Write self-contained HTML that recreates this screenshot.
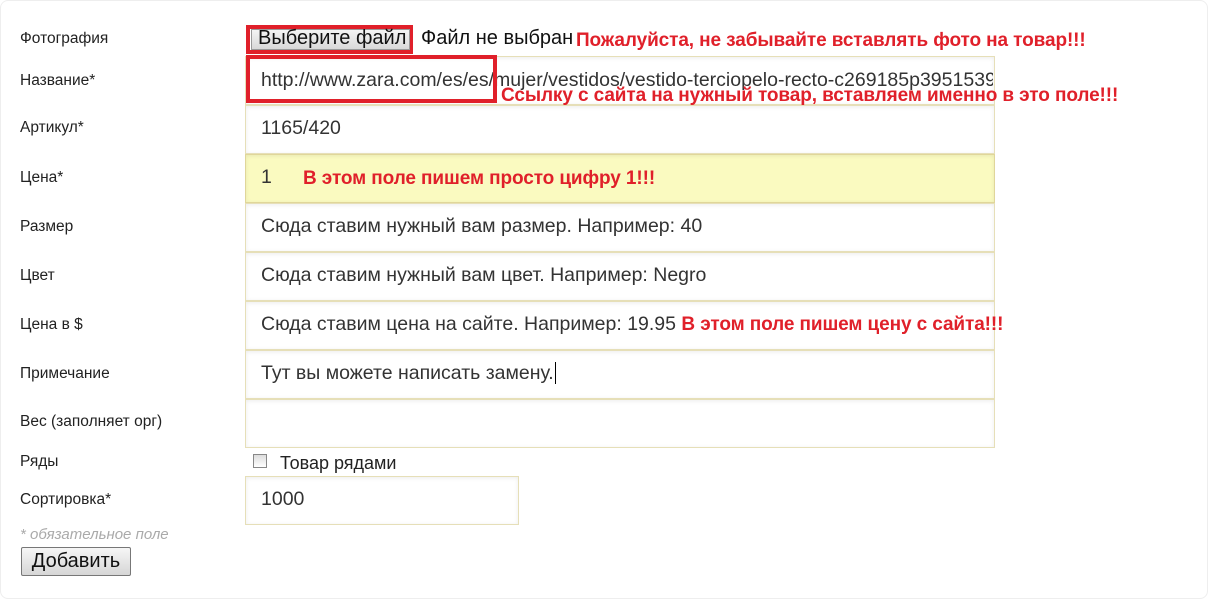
<!DOCTYPE html>
<html><head><meta charset="utf-8"><style>
body{margin:0;width:1208px;height:599px;background:#fff;font-family:"Liberation Sans",sans-serif;position:relative;overflow:hidden}
.a{position:absolute;white-space:nowrap}
.l{font-size:15.5px;color:#222;left:20px}
.in{position:absolute;left:245px;width:748px;height:47px;border:1px solid #e6dfb8;box-shadow:inset 0 1px 4px rgba(0,0,0,.08);background:#fff;box-sizing:content-box}
.t{font-size:19.5px;color:#333;left:261px}
.r{color:#e0202a;font-weight:bold;font-size:19px;letter-spacing:-0.1px}
</style></head><body>
<div style="position:absolute;left:0;top:0;width:1208px;height:599px;border:1px solid #eee;border-radius:8px;box-sizing:border-box"></div>
<div class="a l" style="top:30px">Фотография</div>
<div class="a l" style="top:72px">Название*</div>
<div class="a l" style="top:119px">Артикул*</div>
<div class="a l" style="top:169px">Цена*</div>
<div class="a l" style="top:218px">Размер</div>
<div class="a l" style="top:267px">Цвет</div>
<div class="a l" style="top:316px">Цена в $</div>
<div class="a l" style="top:365px">Примечание</div>
<div class="a l" style="top:413px">Вес (заполняет орг)</div>
<div class="a l" style="top:453px">Ряды</div>
<div class="a l" style="top:491px">Сортировка*</div>
<div class="a" style="left:20px;top:526px;font-size:15px;color:#aaa;font-style:italic">* обязательное поле</div>

<div class="in" style="top:56px"></div>
<div class="in" style="top:105px"></div>
<div class="in" style="top:154px;background:#fafac0;border-color:#e0d69a"></div>
<div class="in" style="top:203px"></div>
<div class="in" style="top:252px"></div>
<div class="in" style="top:301px"></div>
<div class="in" style="top:350px"></div>
<div class="in" style="top:399px"></div>
<div class="in" style="top:476px;width:272px"></div>

<div class="a" style="left:246px;top:25px;width:167px;height:29px;border:4px solid #e0202a;box-sizing:border-box"></div>
<div class="a" style="left:251px;top:29px;width:159px;height:21px;background:linear-gradient(#f4f4f4,#d8d8d8);border:1px solid #999;box-sizing:border-box"></div>
<div class="a" style="left:258px;top:27px;font-size:20px;color:#111">Выберите файл</div>
<div class="a" style="left:421px;top:27px;font-size:20px;color:#111">Файл не выбран</div>
<div class="a r" style="left:576px;top:30px">Пожалуйста, не забывайте вставлять фото на товар!!!</div>

<div class="a t" style="top:69px;width:732px;overflow:hidden">http://www.zara.com/es/es/mujer/vestidos/vestido-terciopelo-recto-c269185p3951539</div>
<div class="a" style="left:246px;top:55px;width:251px;height:48px;border:4px solid #e0202a;box-sizing:border-box"></div>
<div class="a r" style="left:501px;top:85px">Ссылку с сайта на нужный товар, вставляем именно в это поле!!!</div>

<div class="a t" style="top:117px">1165/420</div>
<div class="a t" style="top:166px">1</div>
<div class="a r" style="left:303px;top:168px">В этом поле пишем просто цифру 1!!!</div>
<div class="a t" style="top:215px">Сюда ставим нужный вам размер. Например: 40</div>
<div class="a t" style="top:264px">Сюда ставим нужный вам цвет. Например: Negro</div>
<div class="a t" style="top:313px">Сюда ставим цена на сайте. Например: 19.95 <span class="r">В этом поле пишем цену с сайта!!!</span></div>
<div class="a t" style="top:362px">Тут вы можете написать замену.<span style="border-left:1px solid #000;margin-left:1px"></span></div>

<div class="a" style="left:253px;top:454px;width:14px;height:14px;border:1px solid #888;background:linear-gradient(#ddd,#fff);box-sizing:border-box"></div>
<div class="a" style="left:280px;top:453px;font-size:18px;color:#222">Товар рядами</div>
<div class="a t" style="top:488px">1000</div>

<div class="a" style="left:21px;top:547px;width:110px;height:29px;border:1px solid #777;border-radius:2px;background:linear-gradient(#f6f6f6,#d6d6d6);box-sizing:border-box;font-size:20px;color:#111;text-align:center;line-height:27px">Добавить</div>
</body></html>
